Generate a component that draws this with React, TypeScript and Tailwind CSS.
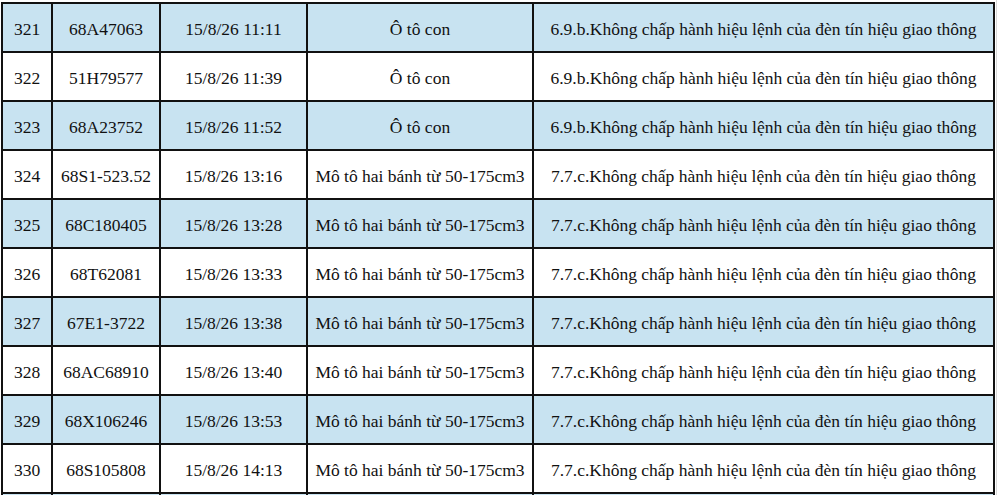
import React from "react";

const rows = [
  ["321", "68A47063", "15/8/26 11:11", "Ô tô con", "6.9.b.Không chấp hành hiệu lệnh của đèn tín hiệu giao thông"],
  ["322", "51H79577", "15/8/26 11:39", "Ô tô con", "6.9.b.Không chấp hành hiệu lệnh của đèn tín hiệu giao thông"],
  ["323", "68A23752", "15/8/26 11:52", "Ô tô con", "6.9.b.Không chấp hành hiệu lệnh của đèn tín hiệu giao thông"],
  ["324", "68S1-523.52", "15/8/26 13:16", "Mô tô hai bánh từ 50-175cm3", "7.7.c.Không chấp hành hiệu lệnh của đèn tín hiệu giao thông"],
  ["325", "68C180405", "15/8/26 13:28", "Mô tô hai bánh từ 50-175cm3", "7.7.c.Không chấp hành hiệu lệnh của đèn tín hiệu giao thông"],
  ["326", "68T62081", "15/8/26 13:33", "Mô tô hai bánh từ 50-175cm3", "7.7.c.Không chấp hành hiệu lệnh của đèn tín hiệu giao thông"],
  ["327", "67E1-3722", "15/8/26 13:38", "Mô tô hai bánh từ 50-175cm3", "7.7.c.Không chấp hành hiệu lệnh của đèn tín hiệu giao thông"],
  ["328", "68AC68910", "15/8/26 13:40", "Mô tô hai bánh từ 50-175cm3", "7.7.c.Không chấp hành hiệu lệnh của đèn tín hiệu giao thông"],
  ["329", "68X106246", "15/8/26 13:53", "Mô tô hai bánh từ 50-175cm3", "7.7.c.Không chấp hành hiệu lệnh của đèn tín hiệu giao thông"],
  ["330", "68S105808", "15/8/26 14:13", "Mô tô hai bánh từ 50-175cm3", "7.7.c.Không chấp hành hiệu lệnh của đèn tín hiệu giao thông"],
  ["", "", "", "", ""],
];

export default function App() {
  return (
    <div
      className="w-[998px] h-[495px] overflow-hidden bg-white pl-[1px] pt-[2px] relative"
      style={{ fontFamily: '"Liberation Serif", "Times New Roman", serif' }}
    >
      <div className="absolute right-[1px] top-0 h-full w-px bg-[#d8d8d8]" />
      <div className="w-[994px] grid grid-cols-[48px_106px_145px_224px_459px] auto-rows-[47px] gap-[2px] p-[2px] bg-[#111]">
        {rows.map((r, i) => {
          const bg = i % 2 === 0 ? "bg-[#c8e3f1]" : "bg-white";
          return r.map((c, j) => (
            <div
              key={`${i}-${j}`}
              className={`${bg} flex items-center justify-center whitespace-nowrap text-[17.5px] text-[#111] pt-[4px]`}
            >
              {c}
            </div>
          ));
        })}
      </div>
    </div>
  );
}
